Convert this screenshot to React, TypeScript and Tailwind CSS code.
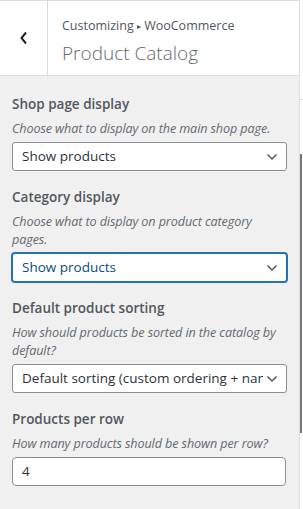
import React from "react";

const Chevron = () => (
  <svg width="12" height="8" viewBox="0 0 12 8" fill="none">
    <path d="M1.5 1.5 6 6l4.5-4.5" stroke="#50575e" strokeWidth="1.5" />
  </svg>
);

const Field: React.FC<{ label: string; desc: string; children: React.ReactNode }> = ({
  label,
  desc,
  children,
}) => (
  <div className="mb-[16px]">
    <div className="text-[13.5px] leading-[20px] font-semibold text-[#50575e]">{label}</div>
    <div className="mt-[6px] text-[12.6px] leading-[18px] italic text-[#646970] tracking-[-0.1px]">
      {desc}
    </div>
    <div className="mt-[4px]">{children}</div>
  </div>
);

const Select: React.FC<{ value: string; focused?: boolean }> = ({ value, focused }) => (
  <div
    className={`h-[29px] w-[275px] bg-white rounded-[3px] flex items-center pl-[9px] pr-[8px] border ${
      focused
        ? "border-[#2271b1] shadow-[0_0_0_1px_#2271b1] text-[#0a4b78]"
        : "border-[#8c8f94] text-[#2c3338]"
    }`}
  >
    <span className="flex-1 whitespace-nowrap overflow-hidden text-[13.5px]">{value}</span>
    <span className="ml-[3px] shrink-0">
      <Chevron />
    </span>
  </div>
);

export default function App() {
  return (
    <div
      className="w-[303px] h-[509px] flex bg-white overflow-hidden"
      style={{ fontFamily: '"Open Sans", "Noto Sans", sans-serif' }}
    >
      <div className="w-[300px] shrink-0 border-r border-[#dcdcde] bg-[#f0f0f1] flex flex-col">
        <div className="h-[76px] shrink-0 bg-white border-t border-b border-[#dcdcde] flex">
          <div className="w-[48px] border-r border-[#dcdcde] flex items-center justify-center">
            <svg width="10" height="14" viewBox="0 0 10 14" fill="none">
              <path d="M7 1.5 2.5 7 7 12.5" stroke="#1d2327" strokeWidth="2" />
            </svg>
          </div>
          <div className="pl-[14px] pt-[15px]">
            <div className="text-[12.5px] leading-[20px] text-[#50575e]">
              Customizing <span className="text-[8px] align-[1px]">▸</span> WooCommerce
            </div>
            <div className="mt-[5px] text-[19px] leading-[24px] font-light text-[#646970]">
              Product Catalog
            </div>
          </div>
        </div>
        <div className="px-[12px] pt-[18px]">
          <Field label="Shop page display" desc="Choose what to display on the main shop page.">
            <Select value="Show products" />
          </Field>
          <Field
            label="Category display"
            desc="Choose what to display on product category pages."
          >
            <Select value="Show products" focused />
          </Field>
          <Field
            label="Default product sorting"
            desc="How should products be sorted in the catalog by default?"
          >
            <Select value="Default sorting (custom ordering + name)" />
          </Field>
          <Field label="Products per row" desc="How many products should be shown per row?">
            <div className="h-[29px] w-[274px] bg-white rounded-[4px] border border-[#8c8f94] flex items-center pl-[9px] text-[13.5px] text-[#2c3338]">
              4
            </div>
          </Field>
        </div>
      </div>
      <div className="flex-1 flex flex-col">
        <div className="h-[100px] border-b border-[#dcdcde]" />
        <div className="h-[54px]" />
        <div className="h-[279px] w-[2px] bg-[#7a7772]" />
      </div>
    </div>
  );
}
